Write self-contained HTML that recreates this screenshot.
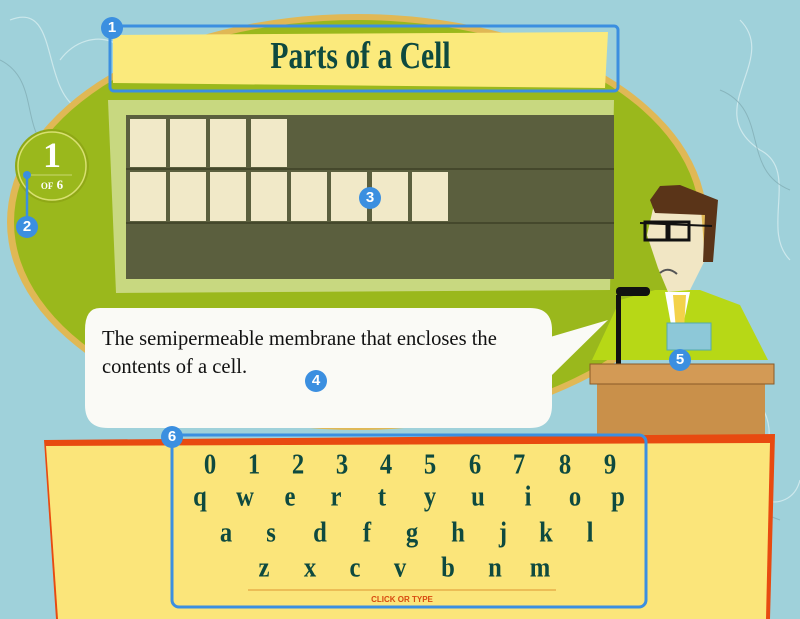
<!DOCTYPE html>
<html><head><meta charset="utf-8"><style>
body{margin:0;width:800px;height:619px;overflow:hidden;background:#9fd1da;position:relative;font-family:"Liberation Serif",serif}
.abs{position:absolute}
.k{position:absolute;font-family:"Liberation Serif",serif;font-weight:bold;font-size:29px;color:#0e4a3f;transform:translate(-50%,-50%) scaleX(.85)}
.badge{position:absolute;width:22px;height:22px;border-radius:50%;background:#3b8fe0;color:#fff;font:bold 15px "Liberation Sans",sans-serif;text-align:center;line-height:22px}
</style></head><body>
<svg class="abs" style="left:0;top:0" width="800" height="619">
<g fill="none" stroke="#d8eef0" stroke-width="1.2" opacity=".8">
<path d="M10 20 C60 0 40 90 80 110 C120 130 30 160 60 190"/>
<path d="M60 60 C90 20 150 40 130 100 C110 150 170 120 160 70"/>
<path d="M740 20 C780 60 700 110 760 150 C800 170 760 230 790 260"/>
<path d="M700 400 C740 360 790 420 760 460 C730 500 790 520 800 480"/>
<path d="M640 300 C690 260 720 330 690 350"/>
</g>
<g fill="none" stroke="#7fa9b0" stroke-width="1" opacity=".7">
<path d="M0 60 C40 80 20 130 50 150 C80 170 20 210 40 240"/>
<path d="M720 90 C770 110 740 170 790 190"/>
<path d="M700 420 C750 450 720 500 780 520"/>
</g>
<ellipse cx="357" cy="222" rx="350" ry="208" fill="#e0b855"/>
<ellipse cx="357" cy="222" rx="343" ry="202" fill="#9ab81c"/>
<polygon points="108,100 614,100 610,290 116,293" fill="#c8d880"/>
<rect x="126" y="115" width="488" height="164" fill="#5b5f3e"/>
<line x1="126" y1="169" x2="614" y2="169" stroke="#45482c" stroke-width="2"/>
<line x1="126" y1="223" x2="614" y2="223" stroke="#45482c" stroke-width="2"/>
<g fill="#f1e9c8">
<rect x="130" y="119" width="36" height="48"/><rect x="170" y="119" width="36" height="48"/><rect x="210" y="119" width="36" height="48"/><rect x="251" y="119" width="36" height="48"/>
<rect x="130" y="172" width="36" height="49"/><rect x="170" y="172" width="36" height="49"/><rect x="210" y="172" width="36" height="49"/><rect x="251" y="172" width="36" height="49"/><rect x="291" y="172" width="36" height="49"/><rect x="331" y="172" width="36" height="49"/><rect x="372" y="172" width="36" height="49"/><rect x="412" y="172" width="36" height="49"/>
</g>
<polygon points="113,35 608,32 605,88 113,83" fill="#fbea7c"/>
<circle cx="52" cy="166" r="37" fill="#8fa816"/>
<circle cx="52" cy="166" r="34" fill="#9ab81c" stroke="#d8e070" stroke-width="1.5"/>
<line x1="30" y1="175" x2="72" y2="175" stroke="#c8d870" stroke-width="1"/>
<path d="M100 308 H530 Q552 308 552 330 V405 Q552 428 530 428 H108 Q85 428 85 405 V330 Q85 308 100 308Z" fill="#fafaf6"/>
<polygon points="540,340 608,320 552,375" fill="#fafaf6"/>
<polygon points="592,360 620,300 655,290 700,290 740,305 768,360" fill="#b7d816"/>
<polygon points="665,292 690,292 682,330 672,330" fill="#fff"/>
<polygon points="673,295 686,295 684,330 676,330" fill="#f3d24a"/>
<polygon points="647,235 655,200 700,195 705,260 690,290 668,292 658,268" fill="#f1e6c4"/>
<polygon points="650,200 660,186 680,185 718,200 713,262 703,262 705,215 655,213" fill="#5a3418"/>
<rect x="645" y="222" width="22" height="18" fill="none" stroke="#111" stroke-width="3"/>
<rect x="669" y="222" width="20" height="18" fill="none" stroke="#111" stroke-width="3"/>
<line x1="640" y1="223" x2="712" y2="226" stroke="#111" stroke-width="2"/>
<path d="M660 273 Q668 266 677 274" stroke="#555" stroke-width="2" fill="none"/>
<rect x="667" y="323" width="44" height="27" fill="#8dc8d8" stroke="#5aa" />
<rect x="616" y="295" width="5" height="70" fill="#111"/>
<rect x="616" y="287" width="34" height="9" rx="4" fill="#111"/>
<rect x="597" y="377" width="168" height="70" fill="#c9904a"/>
<rect x="590" y="364" width="184" height="20" fill="#d39a55" stroke="#8a5a28"/>
<polygon points="44,440 775,434 770,619 56,619" fill="#e84a10"/>
<polygon points="46,446 770,443 766,619 58,619" fill="#fbe57a"/>
<line x1="248" y1="590" x2="556" y2="590" stroke="#e8b04a" stroke-width="1.5"/>
<g fill="none" stroke="#3b8fe0" stroke-width="3">
<rect x="110" y="26" width="508" height="65" rx="4"/>
<rect x="172" y="435" width="474" height="172" rx="7"/>
</g>
<line x1="27" y1="175" x2="27" y2="220" stroke="#3b8fe0" stroke-width="2.5"/>
<circle cx="27" cy="175" r="4" fill="#3b8fe0"/>
</svg>
<div class="abs" style="left:113px;top:33px;width:495px;text-align:center;font-size:38px;font-weight:bold;color:#0e4a3f;line-height:46px;transform:scaleX(.78)">Parts of a Cell</div>
<div class="abs" style="left:22px;top:137px;width:60px;text-align:center;color:#fff;font-size:36px;font-weight:bold;line-height:36px">1</div>
<div class="abs" style="left:22px;top:177px;width:60px;text-align:center;color:#fff;font-size:13px;font-weight:bold"><span style="font-size:9px">OF</span> 6</div>
<div class="abs" style="left:102px;top:324px;font-size:21px;line-height:28px;color:#111;transform-origin:0 0;transform:scaleX(.98);white-space:nowrap">The semipermeable membrane that encloses the<br>contents of a cell.</div>
<div class="abs" style="left:248px;top:595px;width:308px;text-align:center;font:bold 8px 'Liberation Sans',sans-serif;color:#d84a10">CLICK OR TYPE</div>
<div class="k" style="left:210px;top:465px">0</div><div class="k" style="left:254px;top:465px">1</div><div class="k" style="left:298px;top:465px">2</div><div class="k" style="left:342px;top:465px">3</div><div class="k" style="left:386px;top:465px">4</div><div class="k" style="left:430px;top:465px">5</div><div class="k" style="left:475px;top:465px">6</div><div class="k" style="left:519px;top:465px">7</div><div class="k" style="left:565px;top:465px">8</div><div class="k" style="left:610px;top:465px">9</div>
<div class="k" style="left:200px;top:497px">q</div><div class="k" style="left:245px;top:497px">w</div><div class="k" style="left:290px;top:497px">e</div><div class="k" style="left:336px;top:497px">r</div><div class="k" style="left:382px;top:497px">t</div><div class="k" style="left:430px;top:497px">y</div><div class="k" style="left:478px;top:497px">u</div><div class="k" style="left:528px;top:497px">i</div><div class="k" style="left:575px;top:497px">o</div><div class="k" style="left:618px;top:497px">p</div>
<div class="k" style="left:226px;top:533px">a</div><div class="k" style="left:271px;top:533px">s</div><div class="k" style="left:320px;top:533px">d</div><div class="k" style="left:367px;top:533px">f</div><div class="k" style="left:412px;top:533px">g</div><div class="k" style="left:458px;top:533px">h</div><div class="k" style="left:503px;top:533px">j</div><div class="k" style="left:546px;top:533px">k</div><div class="k" style="left:590px;top:533px">l</div>
<div class="k" style="left:264px;top:568px">z</div><div class="k" style="left:310px;top:568px">x</div><div class="k" style="left:355px;top:568px">c</div><div class="k" style="left:400px;top:568px">v</div><div class="k" style="left:448px;top:568px">b</div><div class="k" style="left:495px;top:568px">n</div><div class="k" style="left:540px;top:568px">m</div>
<div class="badge" style="left:101px;top:17px">1</div>
<div class="badge" style="left:16px;top:216px">2</div>
<div class="badge" style="left:359px;top:187px">3</div>
<div class="badge" style="left:305px;top:370px">4</div>
<div class="badge" style="left:669px;top:349px">5</div>
<div class="badge" style="left:161px;top:426px">6</div>
</body></html>
